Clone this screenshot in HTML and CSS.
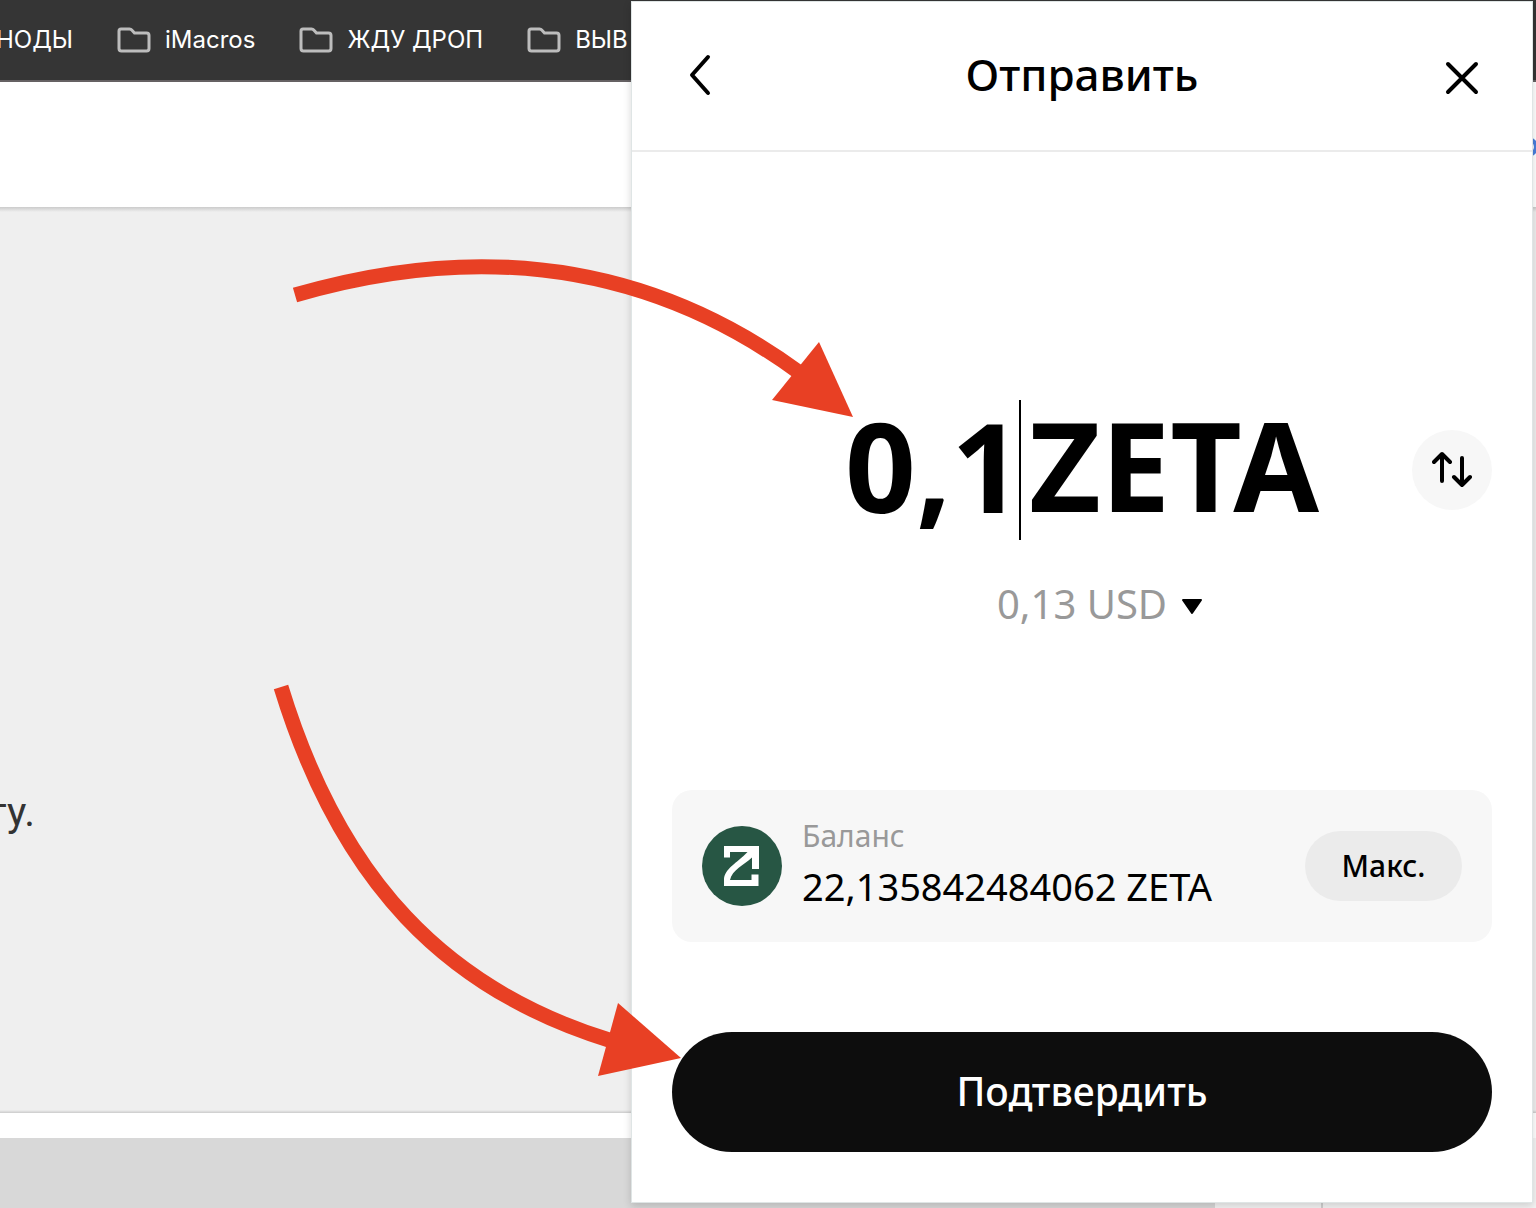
FILE: index.html
```html
<!DOCTYPE html>
<html lang="ru">
<head>
<meta charset="utf-8">
<meta name="viewport" content="width=device-width, initial-scale=1">
<title>Отправить</title>
<link rel="stylesheet" href="styles.css">
</head>
<body>
<div class="browser">
  <nav class="bookmarks">
    <a class="bookmark" href="#">НОДЫ</a>
    <a class="bookmark" href="#"><svg class="folder" viewBox="0 0 34 26"><path d="M4 2H12.500Q14 2 15 3.200L17.500 6H29.500Q32 6 32 8.500V21.500Q32 24 29.500 24H4.500Q2 24 2 21.500V4Q2 2 4 2Z"/></svg>iMacros</a>
    <a class="bookmark" href="#"><svg class="folder" viewBox="0 0 34 26"><path d="M4 2H12.500Q14 2 15 3.200L17.500 6H29.500Q32 6 32 8.500V21.500Q32 24 29.500 24H4.500Q2 24 2 21.500V4Q2 2 4 2Z"/></svg>ЖДУ ДРОП</a>
    <a class="bookmark" href="#"><svg class="folder" viewBox="0 0 34 26"><path d="M4 2H12.500Q14 2 15 3.200L17.500 6H29.500Q32 6 32 8.500V21.500Q32 24 29.500 24H4.500Q2 24 2 21.500V4Q2 2 4 2Z"/></svg>ВЫВ</a>
  </nav>
  <header class="site-header">
    <svg class="site-mark" viewBox="0 0 4 20"><circle cx="-4" cy="10" r="8"/></svg>
  </header>
  <main class="site-main"><p class="site-text">ту.</p></main>
  <div class="site-gap"></div>
  <footer class="site-footer"><span class="footer-tab"></span><span class="footer-rest"></span></footer>
</div>

<section class="wallet" aria-label="Отправить">
  <header class="wallet-header">
    <button class="icon-button" type="button" aria-label="Назад"><svg class="icon-back" viewBox="0 0 24 42"><path d="M20 3L4 21L20 39"/></svg></button>
    <h1 class="wallet-title">Отправить</h1>
    <button class="icon-button icon-button-end" type="button" aria-label="Закрыть"><svg class="icon-close" viewBox="0 0 34 34"><path d="M3 3L31 31M31 3L3 31"/></svg></button>
  </header>
  <form class="wallet-form">
    <div class="amount">
      <div class="amount-row">
        <label class="amount-label"><input class="amount-input" type="text" inputmode="decimal" value="0,1" aria-label="Сумма"><span class="amount-unit">ZETA</span></label>
        <button class="swap" type="button" aria-label="Поменять валюту"><svg class="icon-swap" viewBox="0 0 40 40"><path d="M10 31V4M2 12L10 4L18 12M30 8V35M22 27L30 35L38 27"/></svg></button>
      </div>
      <button class="fiat" type="button">0,13 USD<svg class="icon-down" viewBox="0 0 22 16"><path d="M2 1H20L11 14Z"/></svg></button>
    </div>
    <div class="balance">
      <svg class="coin" viewBox="0 0 80 80"><circle cx="40" cy="40" r="40" fill="#275644"/><path fill="#fff" d="M22 20H57V43H50V31.500C42 39 30 44 28 54H49.500V48.500H56.500V60H22V54C22 43 35 37 45.500 26H28V31.500H22Z"/></svg>
      <div class="balance-info">
        <span class="balance-label">Баланс</span>
        <span class="balance-value">22,135842484062 ZETA</span>
      </div>
      <button class="max" type="button">Макс.</button>
    </div>
    <button class="submit" type="submit">Подтвердить</button>
  </form>
</section>

<svg class="arrows" width="900" height="1100" viewBox="0 0 900 1100" aria-hidden="true">
  <path class="arrow-line" d="M295 295C480 241 650 263 800 373"/>
  <path class="arrow-head" d="M819 342L853 417L772 400Z"/>
  <path class="arrow-line" d="M281 687C340 880 445 990 612 1041"/>
  <path class="arrow-head" d="M618 1003L681 1058L598 1076Z"/>
</svg>
</body>
</html>
```
FILE: styles.css
```css
* { box-sizing: border-box; }

body {
  margin: 0;
  position: relative;
  min-height: 100vh;
  overflow-x: hidden;
  background: #fff;
  font-family: "Noto Sans", sans-serif;
  color: #000;
}

button, input {
  margin: 0;
  padding: 0;
  border: 0;
  background: none;
  font: inherit;
  color: inherit;
}

h1, p { margin: 0; }

/* Browser window behind the wallet */
.browser {
  display: flex;
  flex-direction: column;
  min-height: 100vh;
}

.bookmarks {
  display: flex;
  align-items: center;
  gap: 44px;
  height: 82px;
  margin-left: -4px;
  border-bottom: 2px solid #656163;
  background: #353535;
}

.bookmark {
  display: flex;
  align-items: center;
  gap: 14px;
  font: 24px/32px Inter, sans-serif;
  white-space: nowrap;
  color: #fff;
  text-decoration: none;
}

.folder {
  width: 34px;
  height: 26px;
  fill: none;
  stroke: #bdbdbd;
  stroke-width: 3;
}

.site-header {
  display: flex;
  align-items: center;
  justify-content: flex-end;
  height: 125px;
  padding-top: 4px;
}

.site-mark {
  width: 4px;
  height: 20px;
  fill: none;
  stroke: #4a7fdc;
  stroke-width: 4;
}

.site-main {
  display: flex;
  flex: 1;
  align-items: center;
  padding-top: 304px;
  background:
    linear-gradient(#cbcbcb, #efefef) top / 100% 5px no-repeat,
    linear-gradient(#efefef, #cbcbcb) bottom / 100% 3px no-repeat,
    #efefef;
}

.site-text {
  margin-left: -13px;
  font: 41px/48px Roboto, sans-serif;
  color: #333;
}

.site-gap { height: 25px; }

.site-footer {
  display: flex;
  justify-content: flex-end;
  height: 70px;
  background: #d8d8d8;
}

.footer-tab {
  width: 108px;
  border-right: 2px solid #d0d0d0;
  background: #f4f4f4;
}

.footer-rest {
  width: 213px;
  background: #f4f4f4;
}

/* Wallet popup */
.wallet {
  position: absolute;
  top: 1px;
  right: 3px;
  bottom: 5px;
  width: 902px;
  max-width: 100%;
  display: flex;
  flex-direction: column;
  border: 1px solid #dfe5e5;
  background: #fff;
  box-shadow: 0 3px 8px rgba(0, 0, 0, 0.16);
}

.wallet-header {
  display: grid;
  grid-template-columns: 80px 1fr 80px;
  align-items: center;
  height: 150px;
  padding: 0 48px;
  border-bottom: 2px solid #ebebeb;
}

.icon-button {
  display: flex;
  padding: 0 0 2px 8px;
}

.icon-button-end {
  justify-content: flex-end;
  padding: 4px 5px 0 0;
}

.icon-back, .icon-close, .icon-swap {
  fill: none;
  stroke: #000;
  stroke-width: 4;
  stroke-linecap: round;
  stroke-linejoin: round;
}

.icon-back { width: 24px; height: 42px; }
.icon-close { width: 34px; height: 34px; }
.icon-swap { width: 40px; height: 40px; }

.wallet-title {
  padding-bottom: 4px;
  font-size: 44px;
  line-height: 60px;
  font-weight: 500;
  text-align: center;
}

.wallet-form {
  flex: 1;
  display: flex;
  flex-direction: column;
  padding: 0 40px 50px;
}

.amount {
  flex: 1;
  display: flex;
  flex-direction: column;
  align-items: center;
  justify-content: center;
  gap: 36px;
  padding-top: 178px;
}

.amount-row {
  display: grid;
  grid-template-columns: 80px 1fr 80px;
  align-items: center;
  width: 100%;
}

.amount-label {
  grid-column: 2;
  display: flex;
  justify-content: center;
  font-size: 124px;
  line-height: 128px;
  font-weight: 700;
}

.amount-input {
  width: 176px;
  height: 140px;
  padding-bottom: 12px;
  border-right: 2px solid #000;
}

.amount-unit { padding-left: 8px; }

.swap {
  display: flex;
  align-items: center;
  justify-content: center;
  width: 80px;
  height: 80px;
  border-radius: 50%;
  background: #f7f7f7;
}

.fiat {
  display: flex;
  align-items: center;
  gap: 14px;
  padding-left: 36px;
  font-size: 40px;
  line-height: 56px;
  color: #999;
}

.icon-down {
  width: 22px;
  height: 16px;
  margin-top: 6px;
  fill: #000;
  stroke: #000;
  stroke-width: 2;
  stroke-linejoin: round;
}

.balance {
  display: flex;
  align-items: center;
  gap: 20px;
  height: 152px;
  margin-top: 88px;
  padding: 0 30px;
  border-radius: 20px;
  background: #f7f7f7;
}

.coin { width: 80px; height: 80px; }

.balance-info {
  flex: 1;
  display: flex;
  flex-direction: column;
  padding-bottom: 8px;
}

.balance-label {
  font-size: 30px;
  line-height: 48px;
  color: #999;
}

.balance-value {
  font-size: 38px;
  line-height: 52px;
}

.max {
  width: 157px;
  height: 70px;
  padding-bottom: 2px;
  border-radius: 35px;
  background: #ebebeb;
  font-size: 30px;
  font-weight: 500;
}

.submit {
  height: 120px;
  margin-top: 90px;
  padding-bottom: 4px;
  border-radius: 60px;
  background: #0d0d0d;
  font-size: 39px;
  font-weight: 500;
  color: #fff;
}

/* Pointer arrows over the page */
.arrows {
  position: absolute;
  top: 0;
  left: 0;
  pointer-events: none;
}

.arrow-line {
  fill: none;
  stroke: #e84024;
  stroke-width: 15;
}

.arrow-head { fill: #e84024; }
```
